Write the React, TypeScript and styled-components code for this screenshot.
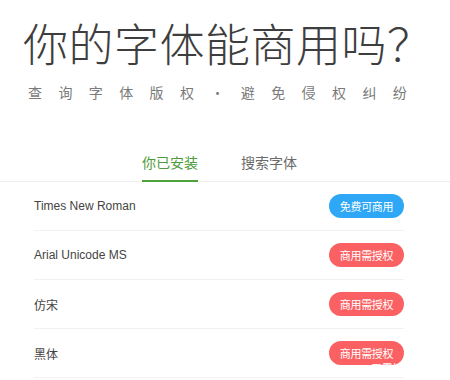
import React, { useState } from 'react';
import styled, { createGlobalStyle } from 'styled-components';

const GlobalStyle = createGlobalStyle`
  html, body {
    margin: 0;
    padding: 0;
    background: #ffffff;
    font-family: "Noto Sans CJK SC", "Noto Sans", "Liberation Sans", sans-serif;
  }
`;

const Page = styled.div`
  width: 450px;
  overflow: hidden;
`;

const Hero = styled.header`
  padding: 19px 0 0 0;
`;

const Title = styled.h1`
  margin: 0;
  padding-left: 23px;
  font-size: 45px;
  line-height: 48px;
  font-weight: 300;
  color: #3e3e3e;
  letter-spacing: 0.5px;
  white-space: nowrap;
`;

const Subtitle = styled.p`
  margin: 16px 0 0 0;
  padding-left: 28px;
  font-size: 14px;
  line-height: 18px;
  letter-spacing: 16.4px;
  color: #7a7a7a;
  white-space: nowrap;
`;

const Tabs = styled.nav`
  display: flex;
  justify-content: center;
  gap: 43px;
  margin-top: 51px;
  padding-right: 11px;
  border-bottom: 1px solid #eeeeee;
`;

const Tab = styled.button<{ $active?: boolean }>`
  background: none;
  border: none;
  padding: 0 0 8px 0;
  margin-bottom: -1px;
  font-family: inherit;
  font-size: 14px;
  line-height: 20px;
  cursor: pointer;
  color: ${(p) => (p.$active ? '#4f9a3a' : '#6a6a6a')};
  border-bottom: 2px solid ${(p) => (p.$active ? '#4ea43a' : 'transparent')};
`;

const List = styled.ul`
  list-style: none;
  margin: 0;
  padding: 0 46px 0 34px;
`;

const Row = styled.li`
  display: flex;
  align-items: center;
  justify-content: space-between;
  height: 48px;
  border-bottom: 1px solid #f2f2f2;
`;

const FontName = styled.span`
  font-family: "Liberation Sans", "Noto Sans CJK SC", sans-serif;
  font-size: 12px;
  color: #444444;
`;

const Badge = styled.span<{ $free?: boolean }>`
  position: relative;
  display: inline-flex;
  align-items: center;
  justify-content: center;
  width: 75px;
  height: 24px;
  border-radius: 12px;
  background: ${(p) => (p.$free ? '#2ea7f6' : '#fb6163')};
  color: #ffffff;
  font-size: 11px;
  letter-spacing: -0.3px;
`;

const GhostHint = styled.span`
  position: absolute;
  left: 42px;
  top: 19px;
  font-size: 11px;
  color: #ffffff;
  white-space: nowrap;
`;

const fonts = [
  { name: 'Times New Roman', free: true },
  { name: 'Arial Unicode MS', free: false },
  { name: '仿宋', free: false },
  { name: '黑体', free: false, hint: true },
];

const App: React.FC = () => {
  const [tab, setTab] = useState(0);

  return (
    <Page>
      <GlobalStyle />
      <Hero>
        <Title>你的字体能商用吗？</Title>
        <Subtitle>查询字体版权·避免侵权纠纷</Subtitle>
      </Hero>
      <Tabs>
        <Tab $active={tab === 0} onClick={() => setTab(0)}>你已安装</Tab>
        <Tab $active={tab === 1} onClick={() => setTab(1)}>搜索字体</Tab>
      </Tabs>
      <List>
        {fonts.map((f) => (
          <Row key={f.name}>
            <FontName>{f.name}</FontName>
            <Badge $free={f.free}>
              {f.free ? '免费可商用' : '商用需授权'}
              {f.hint && <GhostHint>无需授权</GhostHint>}
            </Badge>
          </Row>
        ))}
      </List>
    </Page>
  );
};

export default App;
